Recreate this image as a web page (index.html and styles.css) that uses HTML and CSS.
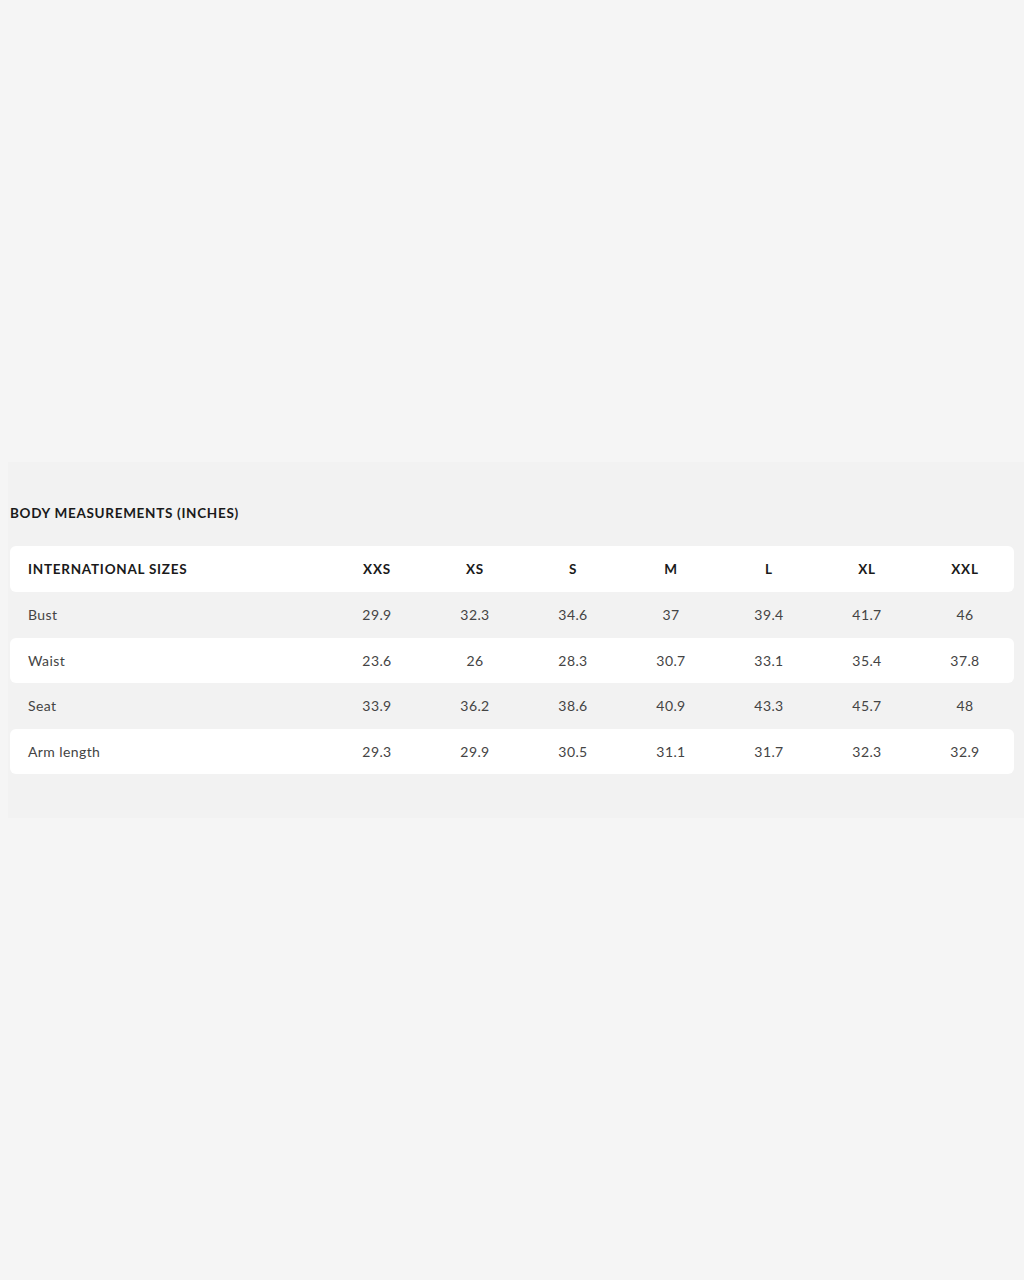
FILE: index.html
```html
<!DOCTYPE html>
<html>
<head>
<meta charset="utf-8">
<link rel="stylesheet" href="styles.css">
</head>
<body>
<section class="panel">
  <h2 class="title">BODY MEASUREMENTS (INCHES)</h2>
  <div class="table">
    <div class="row white head">
      <div class="label">INTERNATIONAL SIZES</div>
      <div class="cell">XXS</div><div class="cell">XS</div><div class="cell">S</div><div class="cell">M</div><div class="cell">L</div><div class="cell">XL</div><div class="cell">XXL</div>
    </div>
    <div class="row">
      <div class="label">Bust</div>
      <div class="cell">29.9</div><div class="cell">32.3</div><div class="cell">34.6</div><div class="cell">37</div><div class="cell">39.4</div><div class="cell">41.7</div><div class="cell">46</div>
    </div>
    <div class="row white">
      <div class="label">Waist</div>
      <div class="cell">23.6</div><div class="cell">26</div><div class="cell">28.3</div><div class="cell">30.7</div><div class="cell">33.1</div><div class="cell">35.4</div><div class="cell">37.8</div>
    </div>
    <div class="row">
      <div class="label">Seat</div>
      <div class="cell">33.9</div><div class="cell">36.2</div><div class="cell">38.6</div><div class="cell">40.9</div><div class="cell">43.3</div><div class="cell">45.7</div><div class="cell">48</div>
    </div>
    <div class="row white">
      <div class="label">Arm length</div>
      <div class="cell">29.3</div><div class="cell">29.9</div><div class="cell">30.5</div><div class="cell">31.1</div><div class="cell">31.7</div><div class="cell">32.3</div><div class="cell">32.9</div>
    </div>
  </div>
</section>
</body>
</html>
```
FILE: styles.css
```css
html, body {
  margin: 0;
  padding: 0;
  background: #f5f5f5;
  font-family: "Lato", "Liberation Sans", sans-serif;
  color: #222;
}
.panel {
  margin: 462px 0 0 8px;
  height: 356px;
  box-sizing: border-box;
  background: #f2f2f2;
  padding: 43px 10px 0 2px;
}
.title {
  margin: 0;
  font-size: 13.5px;
  line-height: 16px;
  font-weight: 700;
  letter-spacing: 0.7px;
  color: #1a1a1a;
}
.table {
  margin-top: 25px;
  width: 1004px;
}
.row {
  display: grid;
  grid-template-columns: 318px repeat(7, 98px);
  height: 45.5px;
  align-items: center;
  font-size: 14px;
  letter-spacing: 0.4px;
  color: #444;
}
.row.white {
  background: #fff;
  border-radius: 6px;
}
.label {
  padding-left: 18px;
}
.cell {
  text-align: center;
}
.head {
  height: 46px;
  font-weight: 700;
  font-size: 13.5px;
  letter-spacing: 0.75px;
  color: #1a1a1a;
}
```
